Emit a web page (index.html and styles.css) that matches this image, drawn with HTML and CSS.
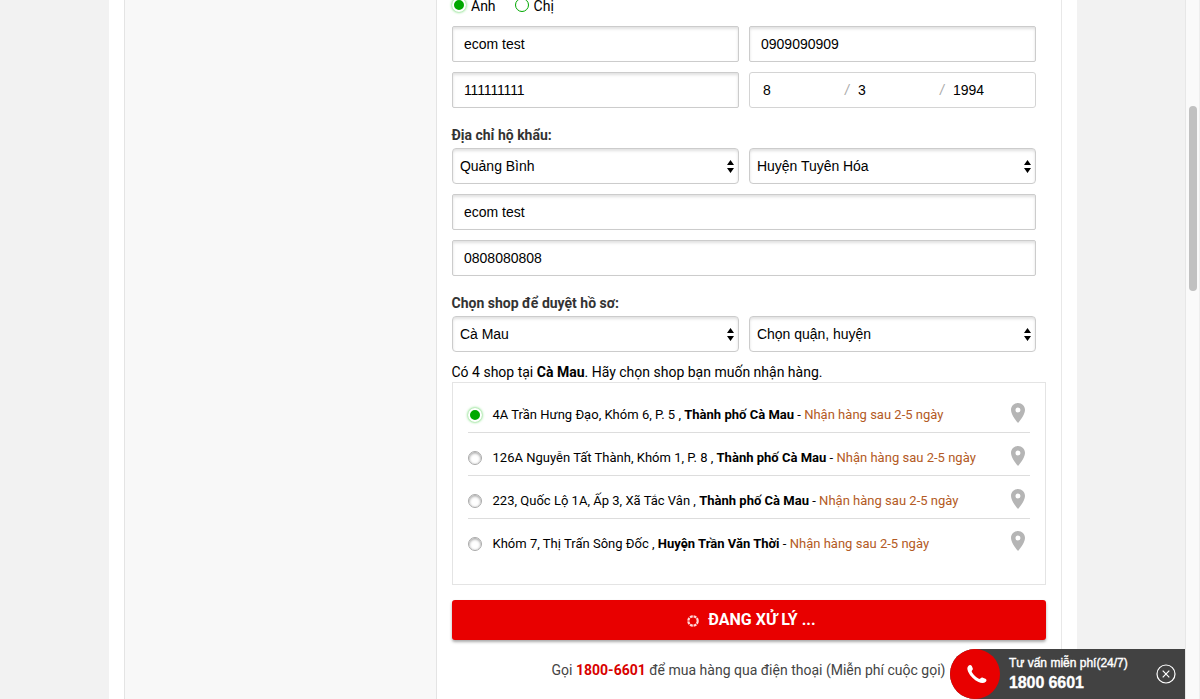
FILE: index.html
```
<!DOCTYPE html>
<html lang="vi">
<head>
<meta charset="utf-8">
<title>Đặt hàng</title>
<link rel="stylesheet" href="styles.css">
</head>
<body>
<svg width="0" height="0" class="defs">
  <symbol id="pin" viewBox="0 0 14 20"><path fill-rule="evenodd" d="M7 0C3.1 0 0 3.1 0 7c0 5.200 7 13 7 13s7-7.800 7-13c0-3.900-3.100-7-7-7zm0 9.500a2.500 2.500 0 1 1 0-5 2.500 2.500 0 0 1 0 5z"/></symbol>
  <symbol id="arrows" viewBox="0 0 7 13"><path d="M3.500 0L7 5H0zM0 8h7l-3.500 5z"/></symbol>
</svg>
<div class="page">
  <main class="container">
    <aside class="side"></aside>
    <section class="form">
      <div class="gender">
        <span class="radio on"></span><span class="male">Anh</span>
        <span class="radio ring"></span><span>Chị</span>
      </div>
      <div class="fields">
        <div class="field">ecom test</div>
        <div class="field">0909090909</div>
        <div class="field"><span class="ones">111111111</span></div>
        <div class="field date"><span>8</span><i>/</i><span>3</span><i>/</i><span>1994</span></div>
      </div>
      <h4>Địa chỉ hộ khẩu:</h4>
      <div class="fields">
        <div class="field select"><span>Quảng Bình</span><svg><use href="#arrows"/></svg></div>
        <div class="field select"><span>Huyện Tuyên Hóa</span><svg><use href="#arrows"/></svg></div>
        <div class="field wide">ecom test</div>
        <div class="field wide">0808080808</div>
      </div>
      <h4>Chọn shop để duyệt hồ sơ:</h4>
      <div class="fields">
        <div class="field select"><span>Cà Mau</span><svg><use href="#arrows"/></svg></div>
        <div class="field select"><span>Chọn quận, huyện</span><svg><use href="#arrows"/></svg></div>
      </div>
      <p class="count">Có 4 shop tại <b>Cà Mau</b>. Hãy chọn shop bạn muốn nhận hàng.</p>
      <ul class="shops">
        <li><span class="radio on"></span><span class="addr">4A Trần Hưng Đạo, Khóm 6, P. 5 , <b>Thành phố Cà Mau</b> - <em>Nhận hàng sau 2-5 ngày</em></span><svg><use href="#pin"/></svg></li>
        <li><span class="radio"></span><span class="addr">126A Nguyễn Tất Thành, Khóm 1, P. 8 , <b>Thành phố Cà Mau</b> - <em>Nhận hàng sau 2-5 ngày</em></span><svg><use href="#pin"/></svg></li>
        <li><span class="radio"></span><span class="addr">223, Quốc Lộ 1A, Ấp 3, Xã Tắc Vân , <b>Thành phố Cà Mau</b> - <em>Nhận hàng sau 2-5 ngày</em></span><svg><use href="#pin"/></svg></li>
        <li><span class="radio"></span><span class="addr">Khóm 7, Thị Trấn Sông Đốc , <b>Huyện Trần Văn Thời</b> - <em>Nhận hàng sau 2-5 ngày</em></span><svg><use href="#pin"/></svg></li>
      </ul>
      <div class="submit">
        <svg viewBox="0 0 12 12"><circle cx="6" cy="6" r="4.700"/></svg>
        <span>ĐANG XỬ LÝ ...</span>
      </div>
      <p class="call">Gọi <b>1800-6601</b> để mua hàng qua điện thoại (Miễn phí cuộc gọi)</p>
    </section>
  </main>
  <div class="scrollbar"><div class="thumb"></div></div>
</div>
<div class="hotline">
  <div class="phone"><svg viewBox="0 0 22 22"><path d="M1.600 1.800C2.700.8 4.300 1 5 2.200l1 2.200c.4 1-.1 1.700-.8 2.500-.4.500-.4 1 0 1.700 1.800 3 4.200 5.300 7.200 6.900.6.300 1.100.2 1.600-.3.800-.8 1.600-1.200 2.600-.8l2.700 1c1.300.6 1.500 2.300.4 3.300-1.900 1.700-4.700 1.700-7.700.2C7.500 16.800 3.300 12.600 1.200 8 0 5.300 0 3.300 1.600 1.800z"/></svg></div>
  <div class="hot-text"><span>Tư vấn miễn phí(24/7)</span><b>1800 6601</b></div>
  <svg class="close" viewBox="0 0 20 20"><circle cx="10" cy="10" r="9"/><path d="M6.700 6.700l6.600 6.600M13.300 6.700l-6.600 6.600"/></svg>
</div>
</body>
</html>
```
FILE: styles.css
```
* { box-sizing: border-box; }
body { margin: 0; height: 699px; overflow: hidden; background: #f2f2f2; color: #000; font: 14px/20px Roboto, sans-serif; }
.defs { display: block; }
.page { display: flex; height: 699px; }
.container { width: 968px; margin-left: 109px; padding: 0 15px; background: #fff; display: flex; flex: none; }
.side { width: 312px; background: #f8f8f8; border-left: 1px solid #e4e4e4; flex: none; }
.form { width: 626px; border-left: 1px solid #e4e4e4; border-right: 1px solid #e8e8e8; padding-left: 15px; flex: none; }
.gender { height: 26px; display: flex; align-items: flex-start; line-height: 13px; }
.gender .radio { margin-right: 5px; margin-top: -2px; }
.male { margin-right: 19px; }
.radio { width: 14px; height: 14px; flex: none; border-radius: 50%; border: 1px solid #aaa; background: #fff; box-shadow: inset 0 1px 3px #999; }
.radio.on { border: 2px solid #fff; background: #00a800; box-shadow: 0 0 3px #39c939; }
.radio.ring { border: 1px solid #00a800; box-shadow: none; }
.fields { width: 584px; display: grid; grid-template-columns: 287px 287px; gap: 10px; }
.field { height: 36px; border: 1px solid #ccc; border-radius: 2px; box-shadow: inset 0 2px 3px #e1e1e1; padding: 0 11px; line-height: 35px; font-family: "Liberation Sans", Arial, sans-serif; white-space: nowrap; }
.wide { grid-column: span 2; }
.ones { letter-spacing: -.150px; }
.date { box-shadow: none; border-radius: 3px; display: grid; grid-template-columns: 81px 14px 81px 14px auto; padding: 0 0 0 13px; border-color: #d4d4d4; }
.date i { color: #aaa; font-style: italic; padding-left: 1px; }
.select { border-radius: 4px; padding: 0 4px 0 7px; display: flex; align-items: center; justify-content: space-between; line-height: 34px; letter-spacing: -.030px; }
.select svg { width: 7px; height: 13px; }
h4 { margin: 17px 0 3px; font-size: 14px; line-height: 20px; font-weight: 700; color: #333; text-indent: -.5px; }
.count { margin: 10px 0 0; line-height: 20px; text-indent: -.5px; }
.shops { width: 594px; height: 203px; margin: 0; padding: 7px 15px; border: 1px solid #e4e4e4; list-style: none; }
.shops li { height: 43px; display: flex; align-items: center; border-bottom: 1px solid #ddd; font-size: 13px; padding: 8px 5px 0 0; }
.shops li:last-child { border-color: transparent; }
.shops li:last-child svg { margin-top: -7px; }
.addr { margin-left: 10.500px; flex: 1; white-space: nowrap; letter-spacing: .015px; }
.shops em { color: #b35a24; font-style: normal; }
.shops svg { width: 14px; height: 20px; fill: #b5b5b5; margin-top: -5px; }
.submit { width: 594px; height: 40px; margin-top: 15px; border-radius: 3px; background: #e80000; color: #fff; box-shadow: 0 2px 3px #aaa; display: flex; align-items: center; justify-content: center; gap: 9px; font-size: 16px; font-weight: 700; padding-left: 5px; }
.submit span { margin-top: -1px; }
.submit svg { width: 12px; height: 12px; fill: none; stroke: #ffd8d8; stroke-width: 2.200; stroke-dasharray: 2.900 .791; margin-top: 2px; }
.call { width: 593px; margin: 20px 0 0; text-align: center; color: #444; white-space: nowrap; }
.call b { color: #d80000; }
.scrollbar { width: 15px; margin-left: 108px; flex: none; background: #fafafa; border-left: 1px solid #e7e7e7; border-right: 1px solid #eee; padding: 106px 2px 0 3px; }
.thumb { width: 8px; height: 185px; border-radius: 4px; background: #c1c1c1; }
.hotline { position: absolute; left: 950px; top: 649px; width: 235px; height: 50px; background: #424242; border-radius: 25px 0 0 25px; display: flex; align-items: center; color: #fff; }
.phone { width: 50px; height: 50px; border-radius: 50%; background: #e80000; display: flex; align-items: center; justify-content: center; }
.phone svg { width: 21px; height: 21px; fill: #fff; margin-left: 4px; }
.hot-text { width: 136px; margin-left: 9px; display: flex; flex-direction: column; font-family: "Liberation Sans", Arial, sans-serif; white-space: nowrap; }
.hot-text span { font-size: 12px; line-height: 16px; -webkit-text-stroke: .4px #fff; }
.hot-text b { font-size: 16px; line-height: 22px; padding-top: 1px; margin-bottom: -1px; letter-spacing: -.1px; -webkit-text-stroke: .3px #fff; }
.close { width: 20px; height: 20px; margin-left: 10.500px; fill: none; stroke: #fff; stroke-width: 1.200; }
```
